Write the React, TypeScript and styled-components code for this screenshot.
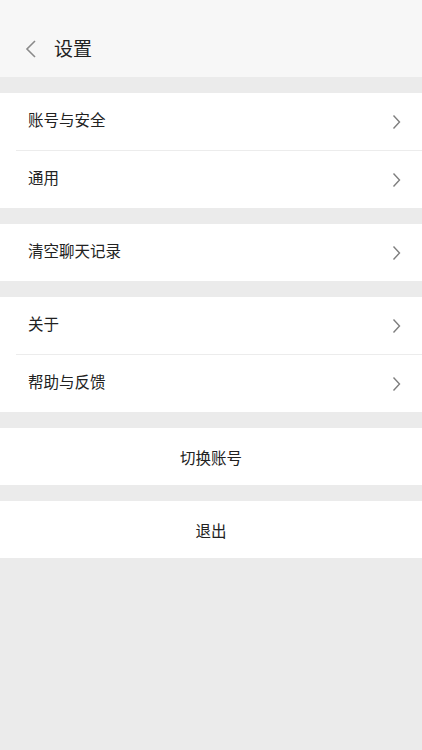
import React from "react";
import styled, { createGlobalStyle } from "styled-components";

const Global = createGlobalStyle`
  html, body {
    margin: 0;
    padding: 0;
    background: #ebebeb;
    font-family: "Noto Sans CJK SC", "Noto Sans", sans-serif;
  }
`;

const Page = styled.div`
  min-height: 750px;
  background: #ebebeb;
`;
const Header = styled.div`
  height: 57px;
  padding-top: 20px;
  background: #f7f7f7;
  display: flex;
  align-items: center;
`;
const BackBtn = styled.div`
  width: 54px;
  display: flex;
  justify-content: center;
  padding-left: 8px;
  box-sizing: border-box;
`;
const Title = styled.h1`
  margin: 0;
  padding-bottom: 3px;
  font-size: 19px;
  font-weight: 400;
  color: #222;
`;
const Group = styled.div`
  background: #fff;
  margin-top: 16px;
`;
const Row = styled.div<{ $center?: boolean }>`
  height: 57px;
  display: flex;
  align-items: center;
  justify-content: ${(p) => (p.$center ? "center" : "space-between")};
  padding: ${(p) => (p.$center ? "0" : "0 20px 0 28px")};
  font-size: 15.5px;
  color: #222;
`;
const Label = styled.span<{ $lift?: number }>`
  padding-bottom: ${(p) => p.$lift ?? 5}px;
`;
const Divider = styled.div`
  height: 1px;
  margin-left: 16px;
  background: #ececec;
`;

const Chevron = () => (
  <svg width="10" height="16" viewBox="0 0 10 16">
    <path d="M1.5 1.5l6 6.5-6 6.5" fill="none" stroke="#7e7e7e" strokeWidth="1.4" />
  </svg>
);

const groups = [["账号与安全", "通用"], ["清空聊天记录"], ["关于", "帮助与反馈"]];

const App: React.FC = () => (
  <Page>
    <Global />
    <Header>
      <BackBtn>
        <svg width="12" height="18" viewBox="0 0 12 18">
          <path d="M10 1L2 9l8 8" fill="none" stroke="#8a8a8a" strokeWidth="1.6" />
        </svg>
      </BackBtn>
      <Title>设置</Title>
    </Header>
    {groups.map((g, gi) => (
      <Group key={gi}>
        {g.map((label, i) => (
          <React.Fragment key={label}>
            {i > 0 && <Divider />}
            <Row>
              <Label>{label}</Label>
              <Chevron />
            </Row>
          </React.Fragment>
        ))}
      </Group>
    ))}
    <Group>
      <Row $center>
        <Label $lift={0}>切换账号</Label>
      </Row>
    </Group>
    <Group>
      <Row $center>
        <Label $lift={0}>退出</Label>
      </Row>
    </Group>
  </Page>
);

export default App;
